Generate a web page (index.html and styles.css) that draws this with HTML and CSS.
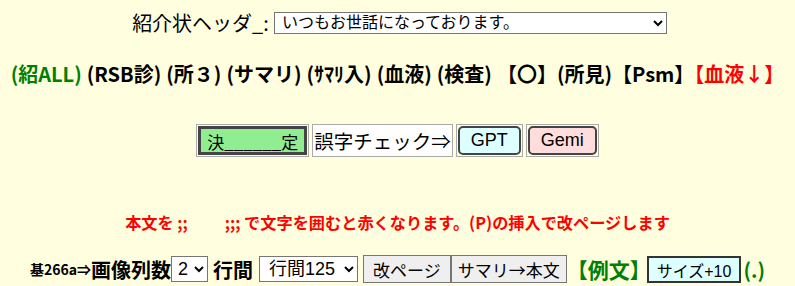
FILE: index.html
```html
<!DOCTYPE html>
<html lang="ja">
<head>
    <meta charset="UTF-8">
    <title>紹介状</title>
    <link rel="stylesheet" href="styles.css">
</head>
<body>
<div class="page">
    <div class="head-row">
        <span class="head-label">紹介状ヘッダ_:</span>
        <select class="head-select">
            <option>いつもお世話になっております。</option>
        </select>
    </div>

    <div class="link-row">
        <span class="green">(紹ALL)</span>
        <span>(RSB診)</span>
        <span>(所３)</span>
        <span>(サマリ)</span>
        <span>(ｻﾏﾘ入)</span>
        <span>(血液)</span>
        <span>(検査)</span>
        <span>【〇】(所見)【Psm】<span class="red">【血液↓】</span></span>
    </div>

    <table class="tool-table">
        <tr>
            <td><button class="btn-decide">決______定</button></td>
            <td class="check-label">誤字チェック⇒</td>
            <td><button class="btn-ai btn-gpt">GPT</button></td>
            <td><button class="btn-ai btn-gemi">Gemi</button></td>
        </tr>
    </table>

    <p class="notice">本文を ;;&nbsp;&nbsp;&nbsp;&nbsp;&nbsp;&nbsp;&nbsp;&nbsp;&nbsp; ;;; で文字を囲むと赤くなります。(P)の挿入で改ページします</p>

    <div class="bottom-row">
        <span class="small-bold">基266a⇒</span><span class="big-bold">画像列数</span><select class="sel sel-cols">
            <option>2</option>
        </select>
        <span class="mid-bold">行間</span>
        <select class="sel sel-line">
            <option>行間125</option>
        </select>
        <button class="btn-plain btn-page">改ページ</button><button class="btn-plain btn-summary">サマリ→本文</button>
        <span class="green mid-bold example">【例文】</span>
        <button class="btn-size">サイズ+10</button><span class="green mid-bold dot">(.)</span>
    </div>
</div>
</body>
</html>
```

FILE: styles.css
```css
body {
    margin: 8px;
    background-color: #ffffe0;
    font-family: "Noto Sans CJK JP", sans-serif;
    color: #000;
}
.page {
    display: flex;
    flex-direction: column;
    align-items: center;
}
.head-row {
    display: flex;
    align-items: center;
    gap: 5px;
    margin-top: 0;
    margin-left: 4px;
}
.head-label {
    font-size: 20px;
}
.head-select {
    width: 393px;
    height: 22px;
    font-family: "Liberation Sans", "Noto Sans CJK JP", sans-serif;
    font-size: 16px;
    border: 1px solid #767676;
    border-radius: 0;
    background: #fff;
    padding: 0 3px;
}
.link-row {
    margin-top: 22px;
    font-size: 20px;
    font-weight: bold;
    display: flex;
    gap: 5px;
}
.green {
    color: #008000;
}
.red {
    color: #ff0000;
}
.tool-table {
    margin-top: 33px;
    border-spacing: 3px;
}
.tool-table td {
    border: 1px solid #aaa;
    padding: 1px;
    background: transparent;
}
.tool-table td.check-label {
    background: #fff;
    font-size: 19.5px;
    padding: 0 1px;
}
.btn-decide {
    background: #90ee90;
    border: 3px solid #444;
    font-family: "Noto Sans CJK JP", sans-serif;
    font-size: 17px;
    height: 29px;
    padding: 0 6px;
    display: block;
}
.btn-ai {
    font-family: "Liberation Sans", sans-serif;
    font-size: 18px;
    height: 29px;
    border: 2px solid #444;
    border-radius: 5px;
    padding: 0 11px;
    display: block;
}
.btn-gpt {
    background: #ddffff;
}
.btn-gemi {
    background: #ffdddd;
}
.notice {
    margin: 50px 0 0;
    color: #ff0000;
    font-size: 16.2px;
    font-weight: bold;
}
.bottom-row {
    margin-top: 20px;
    display: flex;
    align-items: center;
    gap: 5px;
}
.small-bold {
    font-size: 14px;
    font-weight: bold;
}
.big-bold {
    font-size: 20px;
    font-weight: bold;
    margin-left: -5px;
}
.mid-bold {
    font-size: 20px;
    font-weight: bold;
}
.example {
    font-size: 21px;
    margin: 0 -9px 0 -5px;
}
.dot {
    margin-left: -3px;
}
.sel {
    font-family: "Liberation Sans", "Noto Sans CJK JP", sans-serif;
    font-size: 18px;
    height: 26px;
    border: 1px solid #767676;
    background: #fff;
    padding: 0 3px;
}
.sel-cols {
    margin-left: -5px;
    padding: 0 2px;
}
.sel-line {
    padding: 0 5px;
    margin-left: 1px;
}
.btn-plain {
    font-family: "Noto Sans CJK JP", sans-serif;
    font-size: 17px;
    height: 28px;
    background: #efefef;
    border: 1px solid #767676;
}
.btn-page {
    padding: 0 9px;
}
.btn-summary {
    padding: 0 6px;
    margin-left: -5px;
}
.btn-size {
    font-family: "Liberation Sans", "Noto Sans CJK JP", sans-serif;
    font-size: 16px;
    height: 27px;
    background: #ddffff;
    border: 2px solid #333;
    padding: 0 8px;
}
```
